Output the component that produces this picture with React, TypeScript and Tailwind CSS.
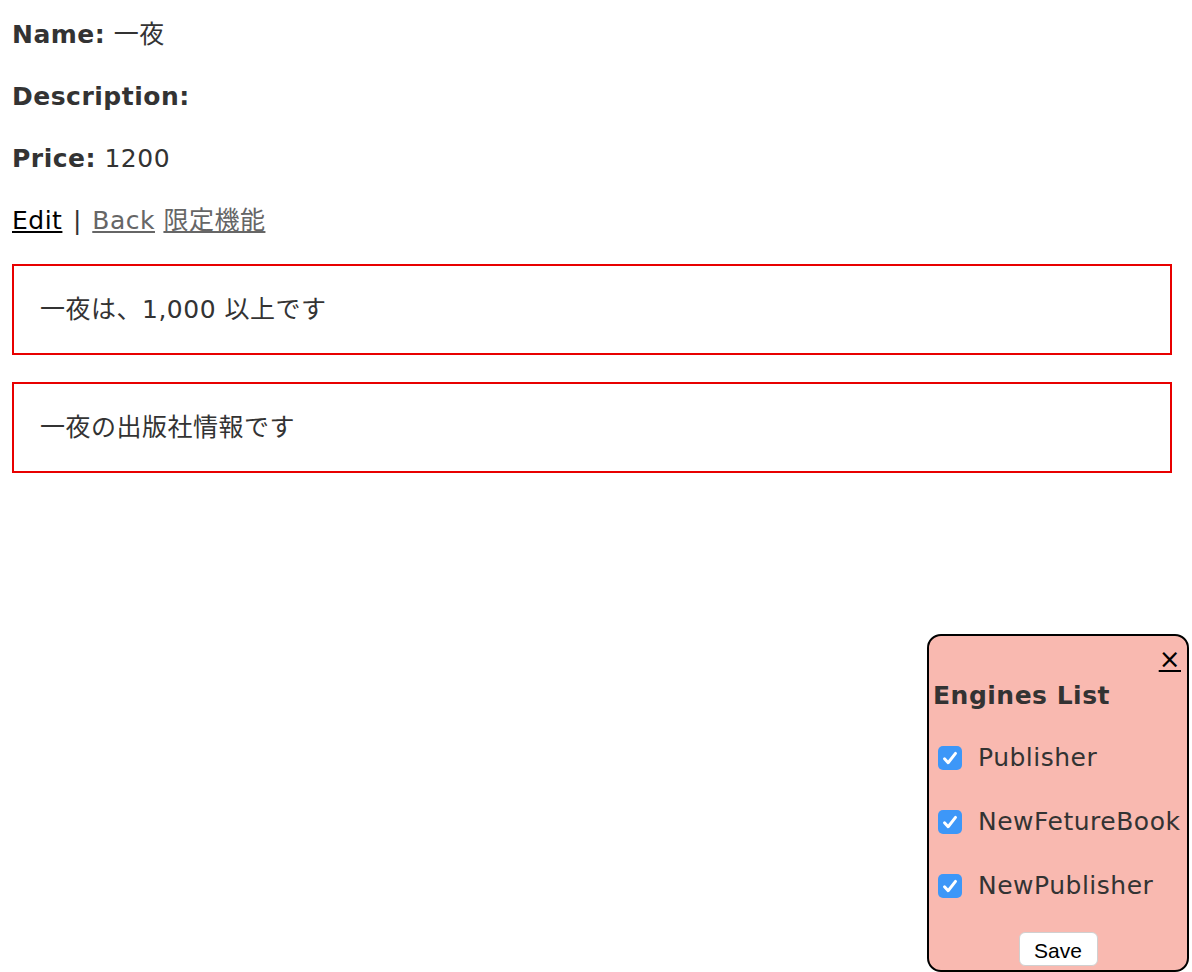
import React from "react";

const font = "font-['DejaVu_Sans','Noto_Sans_CJK_JP',sans-serif]";

function Check() {
  return (
    <span className="flex h-[24px] w-[24px] shrink-0 items-center justify-center rounded-[5px] bg-[#3d97f8]">
      <svg viewBox="0 0 24 24" className="h-[22px] w-[22px]" fill="none" stroke="white" strokeWidth="3.2" strokeLinecap="round" strokeLinejoin="round">
        <path d="M6 12.8l4 4.4L18 7" />
      </svg>
    </span>
  );
}

const engines = ["Publisher", "NewFetureBook", "NewPublisher"];

export default function App() {
  return (
    <div className={`${font} min-h-[972px] bg-white pl-[12px] pr-[20px] pt-[17px] text-[25px] leading-[36px] tracking-[0.5px] text-[#333]`}>
      <p className="mb-[26px]">
        <b>Name:</b> 一夜
      </p>
      <p className="mb-[26px]">
        <b>Description:</b>
      </p>
      <p className="mb-[26px]">
        <b>Price:</b> 1200
      </p>
      <p className="mb-[25px]">
        <a href="#" className="text-black underline">Edit</a> <span className="mx-[2px]">|</span>{" "}
        <a href="#" className="text-[#666] underline">Back</a>{" "}
        <a href="#" className="text-[#666] underline">限定機能</a>
      </p>

      <div className="mb-[27px] flex h-[91px] items-center border-2 border-[#e80000] pl-[26px]">
        一夜は、1,000 以上です
      </div>
      <div className="flex h-[91px] items-center border-2 border-[#e80000] pl-[26px]">
        一夜の出版社情報です
      </div>

      <div className="fixed left-[927px] top-[634px] flex h-[338px] w-[262px] flex-col rounded-[14px] border-2 border-black bg-[#f9b9b0] px-[4px]">
        <div className="flex justify-end pr-[2px] pt-[8px] leading-[30px]">
          <a href="#" className="text-[26px] text-black underline">×</a>
        </div>
        <h3 className="mt-[4px] font-bold leading-[36px]">Engines List</h3>
        <div className="mt-[26px] flex flex-col gap-[28px]">
          {engines.map((e) => (
            <label key={e} className="flex h-[36px] items-center gap-[16px] whitespace-nowrap pl-[5px]">
              <Check />
              <span>{e}</span>
            </label>
          ))}
        </div>
        <div className="mt-auto mb-[4px] flex justify-center">
          <button className="h-[34px] w-[79px] rounded-[6px] border border-[#d0d0d0] bg-white font-['Liberation_Sans',sans-serif] text-[21px] tracking-normal text-black">
            Save
          </button>
        </div>
      </div>
    </div>
  );
}
